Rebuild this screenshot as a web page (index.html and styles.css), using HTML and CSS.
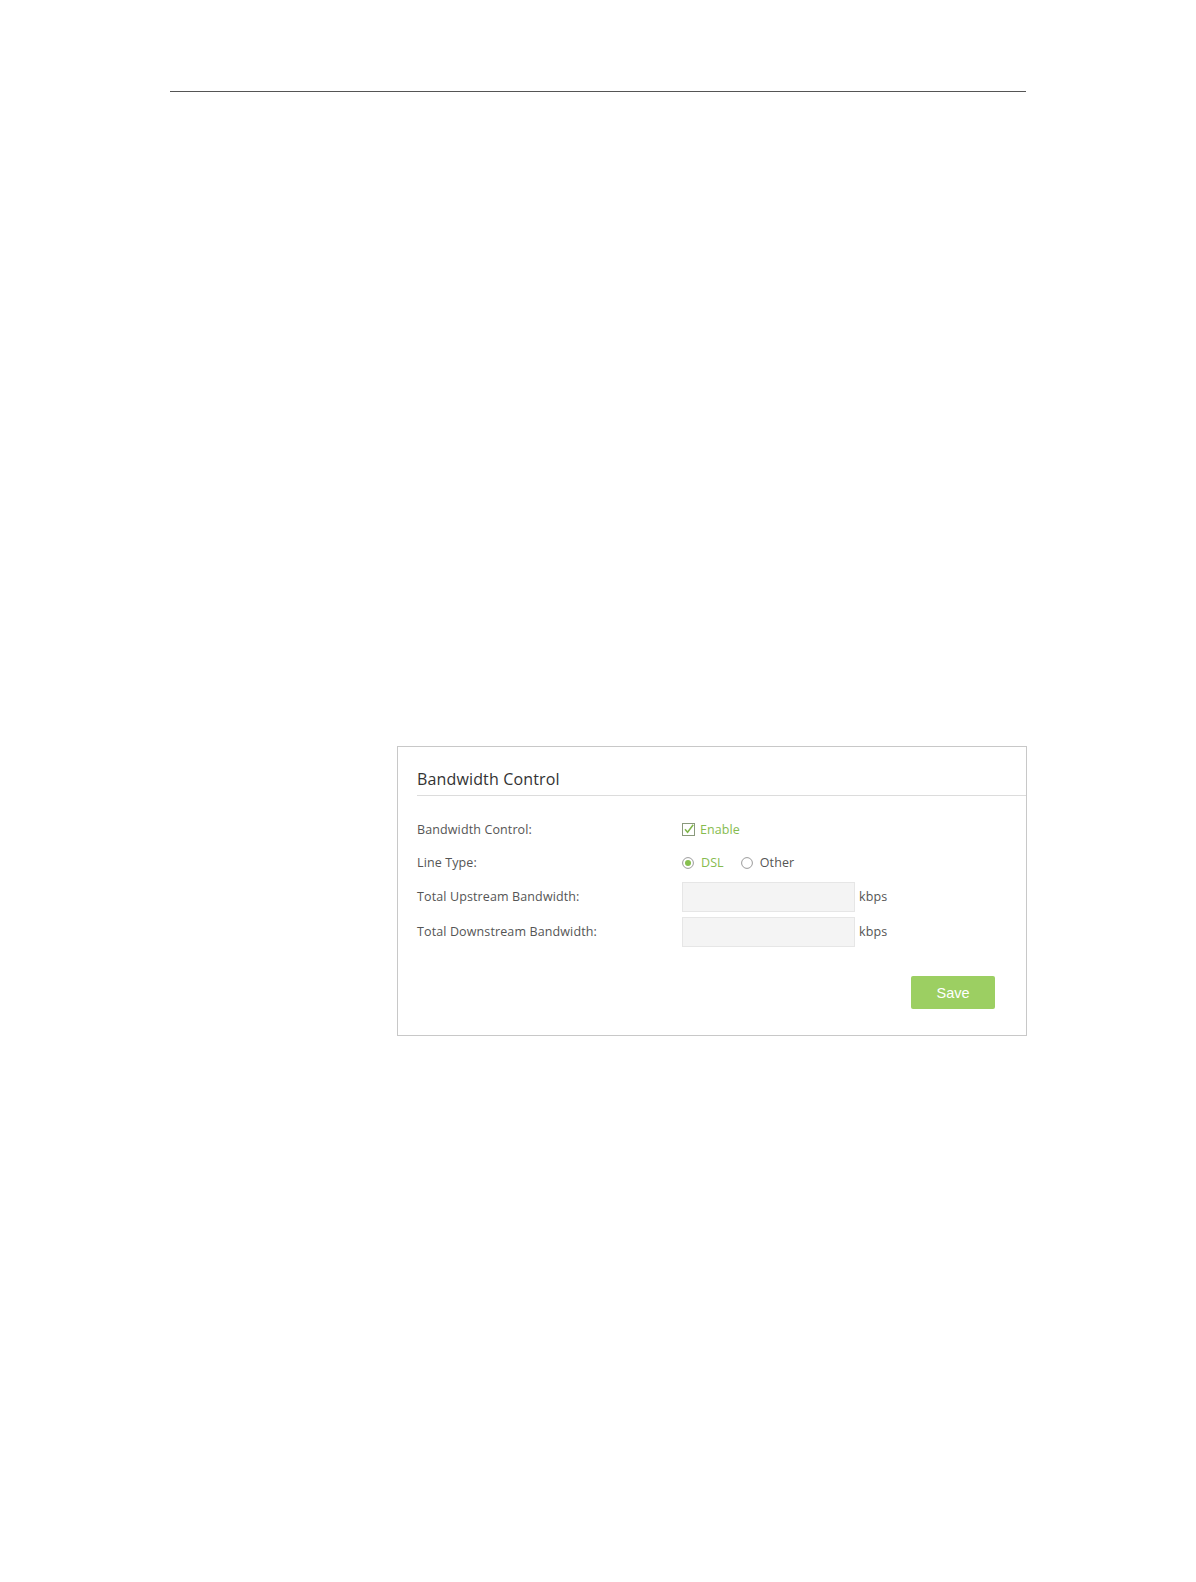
FILE: index.html
```html
<!DOCTYPE html>
<html lang="en">
<head>
<meta charset="utf-8">
<title>Bandwidth Control</title>
<link rel="stylesheet" href="styles.css">
</head>
<body>
<div class="page">
  <div class="rule"></div>
  <section class="panel">
    <h2 class="panel-title">Bandwidth Control</h2>
    <div class="form">
      <div class="row row-1">
        <div class="label">Bandwidth Control:</div>
        <div class="field">
          <span class="check">
            <svg width="13" height="13" viewBox="0 0 13 13"><rect x="0.5" y="0.5" width="12" height="12" fill="#fff" stroke="#8a9a7c"/><path d="M3 6.2 L5.6 9.2 L11.2 1.8" fill="none" stroke="#7fb648" stroke-width="1.5"/></svg>
          </span>
          <span class="green">Enable</span>
        </div>
      </div>
      <div class="row row-2">
        <div class="label">Line Type:</div>
        <div class="field">
          <span class="radio">
            <svg width="12" height="12" viewBox="0 0 12 12"><circle cx="6" cy="6" r="5.4" fill="#fff" stroke="#9a9a9a"/><circle cx="6" cy="6" r="3" fill="#86bf4e"/></svg>
          </span>
          <span class="green opt">DSL</span>
          <span class="radio">
            <svg width="12" height="12" viewBox="0 0 12 12"><circle cx="6" cy="6" r="5.4" fill="#fff" stroke="#9a9a9a"/></svg>
          </span>
          <span class="opt">Other</span>
        </div>
      </div>
      <div class="row row-3">
        <div class="label">Total Upstream Bandwidth:</div>
        <div class="field">
          <input class="input" type="text">
          <span class="unit">kbps</span>
        </div>
      </div>
      <div class="row row-4">
        <div class="label">Total Downstream Bandwidth:</div>
        <div class="field">
          <input class="input" type="text">
          <span class="unit">kbps</span>
        </div>
      </div>
    </div>
    <div class="actions">
      <button class="save" type="button">Save</button>
    </div>
  </section>
</div>
</body>
</html>
```
FILE: styles.css
```css
html, body {
  margin: 0;
  padding: 0;
  background: #fff;
}
body {
  font-family: "Open Sans", "Noto Sans", "DejaVu Sans", sans-serif;
  color: #555;
}
.page {
  width: 856px;
  margin-left: 170px;
  padding-top: 91px;
  height: 1491px;
}
.rule {
  border-top: 1px solid #555;
}
.panel {
  margin-top: 654px;
  margin-left: 227px;
  width: 628px;
  border: 1px solid #c8c8c8;
}
.panel-title {
  margin: 0 0 0 19px;
  padding: 22px 0 6px 0;
  font-size: 16px;
  letter-spacing: 0.15px;
  line-height: 20px;
  font-weight: normal;
  color: #333;
  border-bottom: 1px solid #dcdcdc;
}
.form {
  padding: 16px 0 0 19px;
}
.row {
  display: flex;
  align-items: center;
}
.row-1 { height: 34px; }
.row-2 { height: 33px; }
.row-3 { height: 35px; }
.row-4 { height: 35px; }
.label {
  width: 265px;
  font-size: 12.5px;
  letter-spacing: 0.12px;
  color: #555;
}
.field {
  display: flex;
  align-items: center;
  font-size: 12.5px;
  letter-spacing: 0.1px;
}
.check {
  display: flex;
  margin-right: 5px;
}
.check svg, .radio svg { display: block; }
.radio {
  display: flex;
  margin-right: 7px;
}
.green {
  color: #86bb4f;
}
.opt {
  margin-right: 17px;
}
.input {
  box-sizing: border-box;
  width: 173px;
  height: 30px;
  margin: 0;
  background: #f4f4f4;
  border: 1px solid #e6e6e6;
  outline: none;
}
.unit {
  margin-left: 4px;
  color: #555;
}
.actions {
  display: flex;
  justify-content: flex-end;
  padding: 27px 31px 26px 0;
}
.save {
  width: 84px;
  height: 33px;
  border: none;
  border-radius: 2px;
  background: #9ccf62;
  color: #fff;
  font-family: "Liberation Sans", Arial, sans-serif;
  font-size: 14.5px;
  padding: 0;
}
```
